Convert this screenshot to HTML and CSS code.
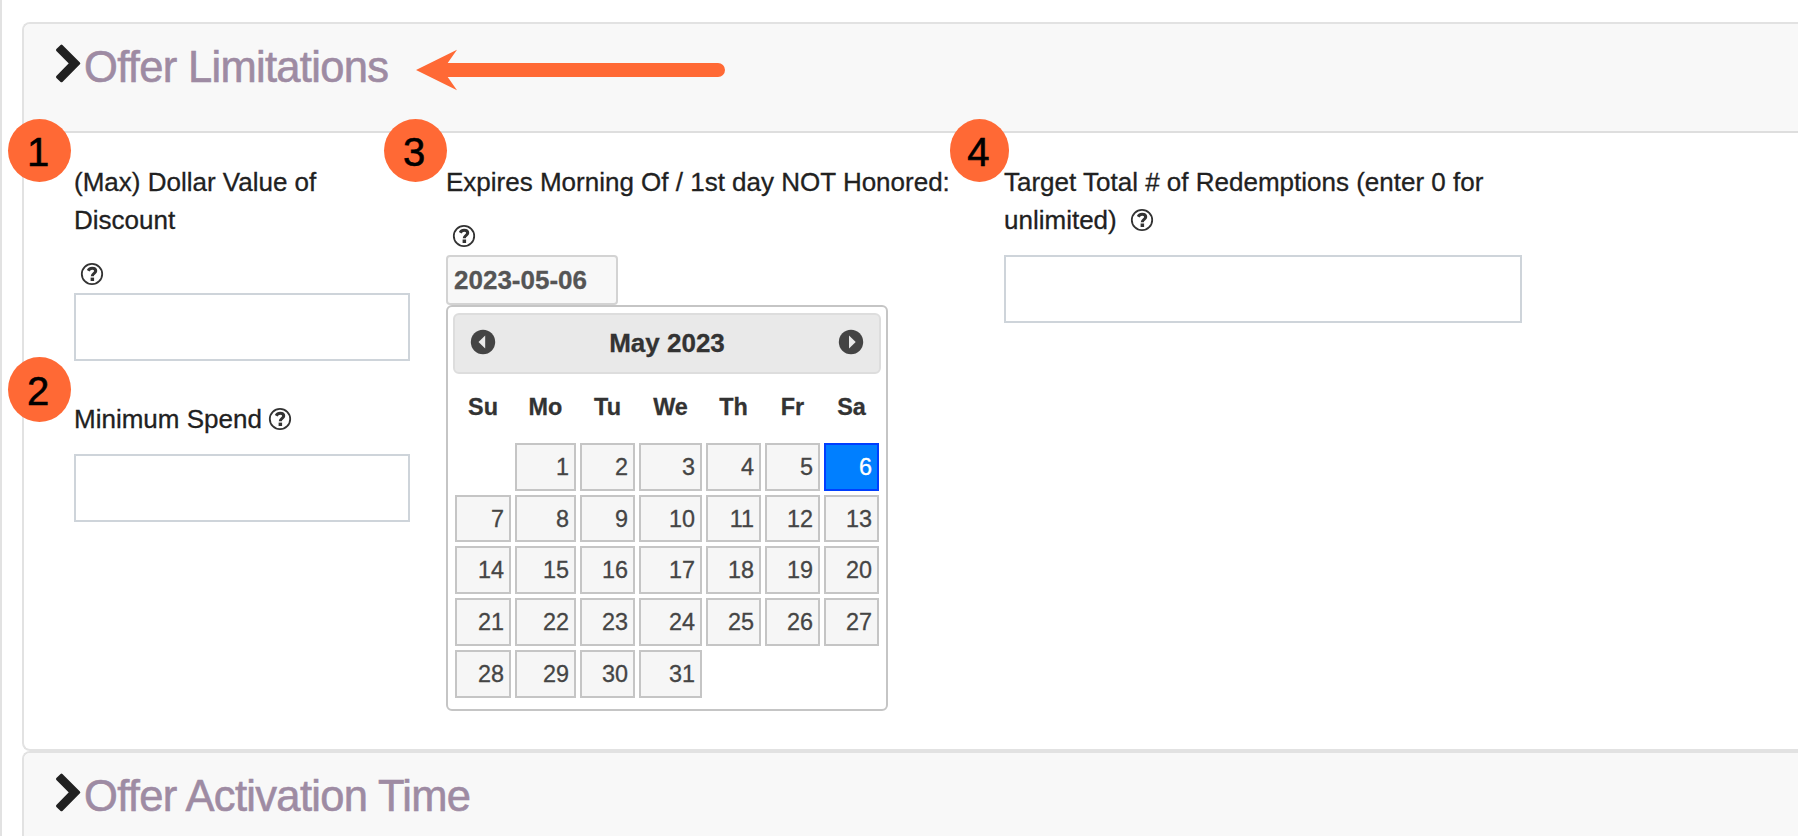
FILE: index.html
```html
<!DOCTYPE html>
<html lang="en">

<head>
    <meta charset="UTF-8">
    <meta name="viewport" content="width=device-width, initial-scale=1.0">
    <title>Offer Limitations</title>
    <link rel="stylesheet" href="styles.css">
</head>

<body>
    <svg width="0" height="0" class="defs">
        <symbol id="chevron" viewBox="0 0 26 42">
            <path d="M6.5 2.8L24 20.3L6.5 38L2.3 34L15.5 20.3L2.3 7Z" fill="#212121" stroke="#212121" stroke-width="2.6" stroke-linejoin="round" />
        </symbol>
        <symbol id="help" viewBox="0 0 24 24">
            <circle cx="12" cy="12" r="10.2" fill="none" stroke="#333" stroke-width="1.8" />
            <path d="M8.2 8.7C9.1 7 10.3 6.3 12.1 6.3C14.4 6.3 15.7 7.6 15.7 9C15.7 11.4 12.3 11.4 12.3 14.2" fill="none" stroke="#333" stroke-width="3.1" />
            <path d="M10.6 15.6h3.5v3.4h-3.5z" fill="#333" />
        </symbol>
    </svg>

    <div class="page">
        <section class="card">
            <header class="card-header">
                <svg class="chevron"><use href="#chevron" /></svg>
                <h2>Offer Limitations</h2>
            </header>
            <div class="card-body">
                <div class="col-value">
                    <label class="label">(Max) Dollar Value of Discount</label>
                    <div class="help-row"><svg class="help"><use href="#help" /></svg></div>
                    <input class="field" type="text">
                    <div class="label spend">Minimum Spend <svg class="help"><use href="#help" /></svg></div>
                    <input class="field spaced" type="text">
                </div>

                <div class="col-expires">
                    <label class="label expires">Expires Morning Of / 1st day NOT Honored:</label>
                    <div class="help-row"><svg class="help"><use href="#help" /></svg></div>
                    <input class="date" type="text" value="2023-05-06">
                    <div class="calendar">
                        <div class="calendar-header">
                            <svg class="arrow" viewBox="0 0 26 26">
                                <circle cx="13" cy="13" r="12.2" fill="#444" />
                                <path d="M15.2 6.5V19.5L8.5 13Z" fill="#e9e9e9" />
                            </svg>
                            <span>May 2023</span>
                            <svg class="arrow" viewBox="0 0 26 26">
                                <circle cx="13" cy="13" r="12.2" fill="#444" />
                                <path d="M11 6.5V19.5L17.7 13Z" fill="#e9e9e9" />
                            </svg>
                        </div>
                        <div class="days names">
                            <b>Su</b><b>Mo</b><b>Tu</b><b>We</b><b>Th</b><b>Fr</b><b>Sa</b>
                        </div>
                        <div class="days">
                            <span class="empty"></span>
                            <span class="day">1</span>
                            <span class="day">2</span>
                            <span class="day">3</span>
                            <span class="day">4</span>
                            <span class="day">5</span>
                            <span class="day active">6</span>
                            <span class="day">7</span>
                            <span class="day">8</span>
                            <span class="day">9</span>
                            <span class="day">10</span>
                            <span class="day">11</span>
                            <span class="day">12</span>
                            <span class="day">13</span>
                            <span class="day">14</span>
                            <span class="day">15</span>
                            <span class="day">16</span>
                            <span class="day">17</span>
                            <span class="day">18</span>
                            <span class="day">19</span>
                            <span class="day">20</span>
                            <span class="day">21</span>
                            <span class="day">22</span>
                            <span class="day">23</span>
                            <span class="day">24</span>
                            <span class="day">25</span>
                            <span class="day">26</span>
                            <span class="day">27</span>
                            <span class="day">28</span>
                            <span class="day">29</span>
                            <span class="day">30</span>
                            <span class="day">31</span>
                        </div>
                    </div>
                </div>

                <div class="col-target">
                    <div class="label target">Target Total # of Redemptions (enter 0 for unlimited) <svg class="help"><use href="#help" /></svg></div>
                    <input class="field spaced" type="text">
                </div>
            </div>
        </section>

        <section class="card">
            <header class="card-header">
                <svg class="chevron"><use href="#chevron" /></svg>
                <h2>Offer Activation Time</h2>
            </header>
        </section>

        <!-- callouts over the form -->
        <svg class="pointer" viewBox="0 0 310 42">
            <path d="M0 21L41 0.7L31.7 14H302a7 7 0 0 1 0 14H31.7L41 41.3Z" fill="#ff6935" />
        </svg>
        <div class="badge one">1</div>
        <div class="badge two">2</div>
        <div class="badge three">3</div>
        <div class="badge four">4</div>
    </div>
</body>

</html>
```
FILE: styles.css
```css
* {
    box-sizing: border-box;
}

body {
    margin: 0;
    height: 836px;
    overflow: hidden;
    background-color: #fff;
    color: #212121;
    font-family: "Liberation Sans", Arial, sans-serif;
    font-size: 26px;
    line-height: 38px;
    -webkit-text-stroke: 0.3px;
}

.defs {
    position: absolute;
}

.page {
    position: relative;
    height: 836px;
    padding: 22px 0 0 20px;
    border-left: 2px solid #e2e2e2;
    overflow: hidden;
}

.card {
    border: 2px solid #e2e2e2;
    border-right: none;
    border-radius: 8px 0 0 8px;
    overflow: hidden;
}

.card-header {
    display: flex;
    height: 109px;
    padding: 19px 0 0 31px;
    background-color: #f8f8f8;
    border-bottom: 2px solid #dedede;
}

.chevron {
    width: 26px;
    height: 42px;
}

h2 {
    margin: 0 0 0 3px;
    color: #9e8ba3;
    font-size: 43.5px;
    font-weight: normal;
    line-height: 48px;
    letter-spacing: -0.68px;
    -webkit-text-stroke: 0.6px;
}

.card-body {
    display: flex;
    gap: 36px;
    height: 616px;
    padding: 30px 0 0 50px;
}

.col-value {
    width: 336px;
}

.col-expires {
    width: 522px;
}

.col-target {
    width: 518px;
}

.label {
    display: block;
}

.expires {
    white-space: nowrap;
}

.help {
    width: 24px;
    height: 24px;
    margin-left: -1px;
    vertical-align: -3px;
}

.help-row {
    display: flex;
    align-items: center;
    height: 38px;
    margin-top: 16px;
    padding-left: 7px;
}

.target .help {
    margin-left: 6px;
}

.spend {
    margin-top: 39px;
}

.field {
    display: block;
    width: 100%;
    height: 68px;
    background-color: #fff;
    border: 2px solid #ced4da;
}

.spaced {
    margin-top: 16px;
}

.date {
    display: block;
    width: 172px;
    height: 50px;
    padding: 0 6px;
    background-color: #f8f8f8;
    border: 2px solid #d3d3d3;
    border-radius: 4px;
    color: #555;
    font-family: inherit;
    font-size: 26px;
    font-weight: bold;
}

.calendar {
    width: 442px;
    height: 406px;
    padding: 6px 5px;
    background-color: #fff;
    border: 2px solid #c5c5c5;
    border-radius: 6px;
}

.calendar-header {
    display: flex;
    justify-content: space-between;
    height: 61px;
    padding: 9px 15px 0;
    background-color: #e9e9e9;
    border: 2px solid #ddd;
    border-radius: 6px;
    color: #333;
    font-weight: bold;
}

.arrow {
    width: 26px;
    height: 26px;
    margin-top: 5px;
}

.days {
    display: grid;
    grid-template-columns: 56px 61px 55px 63px 55px 55px 55px;
    grid-template-rows: 48px 47px 48px 48px 48px;
    gap: 4px;
    padding-left: 2px;
    color: #454545;
    font-size: 23.4px;
}

.names {
    grid-template-rows: 69px;
    color: #333;
    line-height: 66px;
    text-align: center;
}

.day {
    padding-right: 5px;
    background-color: #f6f6f6;
    border: 2px solid #c5c5c5;
    line-height: 44px;
    text-align: right;
}

.active {
    background-color: #007fff;
    border-color: #003eff;
    color: #fff;
}

.pointer {
    position: absolute;
    left: 414px;
    top: 49px;
    width: 310px;
    height: 42px;
}

.badge {
    position: absolute;
    width: 63px;
    height: 63px;
    padding-right: 2px;
    border-radius: 50%;
    background-color: #ff6935;
    color: #000;
    font-size: 40px;
    line-height: 67px;
    text-align: center;
    -webkit-text-stroke: 0.6px;
}

.one {
    left: 5.6px;
    top: 119.4px;
}

.two {
    left: 5.6px;
    top: 357.3px;
    height: 65px;
    line-height: 69px;
}

.three {
    left: 381.6px;
    top: 119.4px;
}

.four {
    left: 947.5px;
    top: 119.4px;
    width: 59.5px;
}
```
